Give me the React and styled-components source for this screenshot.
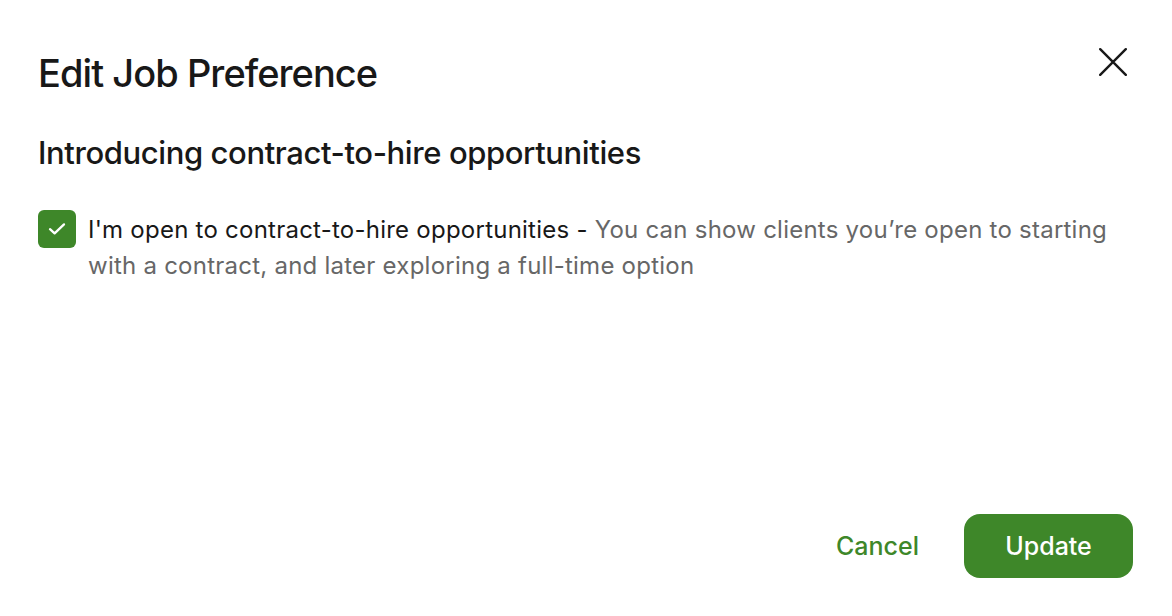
import React, { useState } from "react";
import styled, { createGlobalStyle } from "styled-components";

const GlobalStyle = createGlobalStyle`
  html, body { margin: 0; padding: 0; background: #ffffff; }
  body { font-family: Inter, "Liberation Sans", Arial, sans-serif; -webkit-font-smoothing: antialiased; }
  * { box-sizing: border-box; }
`;

const Modal = styled.div`
  width: 1172px;
  height: 616px;
  padding: 40px 39px 38px 38px;
  display: flex;
  flex-direction: column;
  background: #fff;
`;

const Header = styled.div`
  display: flex;
  align-items: flex-start;
  justify-content: space-between;
`;

const Title = styled.h1`
  margin: 10px 0 0;
  font-size: 38px;
  line-height: 46px;
  font-weight: 500;
  letter-spacing: -0.95px;
  color: #181818;
`;

const CloseButton = styled.button`
  width: 40px;
  height: 40px;
  margin: 2px 0 0 0;
  padding: 0;
  border: none;
  background: transparent;
  display: flex;
  align-items: center;
  justify-content: center;
  cursor: pointer;
  color: #181818;
`;

const Subtitle = styled.h2`
  margin: 38px 0 0;
  font-size: 31px;
  line-height: 38px;
  font-weight: 500;
  letter-spacing: -0.4px;
  color: #181818;
`;

const OptionRow = styled.label`
  margin-top: 40px;
  display: flex;
  align-items: flex-start;
  gap: 12px;
  cursor: pointer;
`;

const Box = styled.span`
  flex: none;
  width: 38px;
  height: 38px;
  margin-top: -2px;
  border-radius: 6px;
  background: ${(p) => (p.$checked ? "#3e8729" : "#fff")};
  border: ${(p) => (p.$checked ? "none" : "2px solid #9aa0a6")};
  display: flex;
  align-items: center;
  justify-content: center;
`;

const OptionText = styled.span`
  font-size: 24px;
  line-height: 36px;
  letter-spacing: 0.24px;
  color: #181818;
`;

const Muted = styled.span`
  color: #676767;
`;

const Footer = styled.div`
  margin-top: auto;
  display: flex;
  justify-content: flex-end;
  align-items: center;
  gap: 45px;
`;

const TextButton = styled.button`
  border: none;
  background: transparent;
  padding: 0;
  font-family: inherit;
  font-size: 25px;
  font-weight: 500;
  color: #3e8729;
  cursor: pointer;
`;

const PrimaryButton = styled.button`
  width: 169px;
  height: 64px;
  border: none;
  border-radius: 16px;
  background: #3e8729;
  color: #fff;
  font-family: inherit;
  font-size: 25px;
  font-weight: 500;
  cursor: pointer;
`;

export default function App() {
  const [checked, setChecked] = useState(true);
  return (
    <>
      <GlobalStyle />
      <Modal>
        <Header>
          <Title>Edit Job Preference</Title>
          <CloseButton aria-label="Close">
            <svg width="28" height="28" viewBox="0 0 28 28" fill="none">
              <path d="M1.2 1.2L26.8 26.8M26.8 1.2L1.2 26.8" stroke="currentColor" strokeWidth="2.4" strokeLinecap="round" />
            </svg>
          </CloseButton>
        </Header>
        <Subtitle>Introducing contract-to-hire opportunities</Subtitle>
        <OptionRow onClick={() => setChecked((c) => !c)}>
          <Box $checked={checked}>
            {checked && (
              <svg width="18" height="14" viewBox="0 0 18 14" fill="none">
                <path d="M2 7.2L6.6 11.4L16 2.4" stroke="#fff" strokeWidth="2.3" strokeLinecap="round" strokeLinejoin="round" />
              </svg>
            )}
          </Box>
          <OptionText>
            I'm open to contract-to-hire opportunities -{" "}
            <Muted>
              You can show clients you’re open to starting with a contract, and later exploring a full-time option
            </Muted>
          </OptionText>
        </OptionRow>
        <Footer>
          <TextButton>Cancel</TextButton>
          <PrimaryButton>Update</PrimaryButton>
        </Footer>
      </Modal>
    </>
  );
}
